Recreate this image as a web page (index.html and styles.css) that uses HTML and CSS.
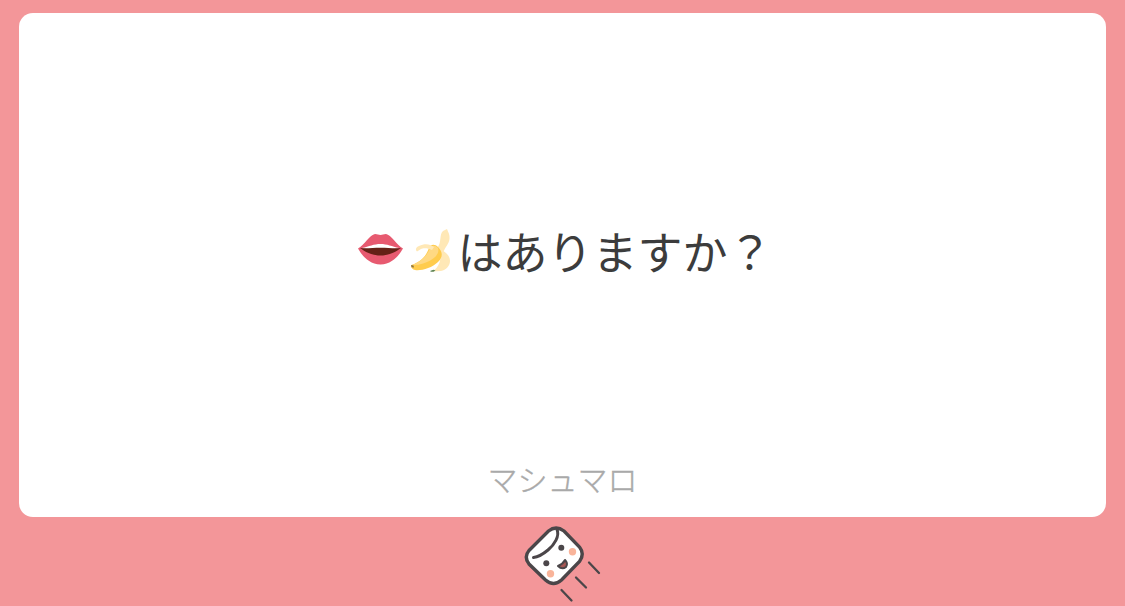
FILE: index.html
```html
<!DOCTYPE html>
<html lang="ja">

<head>
    <meta charset="UTF-8">
    <meta name="viewport" content="width=device-width, initial-scale=1.0">
    <title>マシュマロ</title>
    <link rel="stylesheet" href="styles.css">
</head>

<body>
    <main class="card">
        <p class="message">
            <svg class="emoji" viewBox="0 0 45 45" role="img" aria-label="口">
                <path fill="#e75a70" d="M0 20.500C6 17.500 12 6.500 17 6c2.500 0 3.500 1 5.500 1s3-1 5.500-1C33 6.500 39 17.500 45 20.500c-3 5-10 16-22.500 16S3 25.500 0 20.500z" />
                <path fill="#fff" d="M4 20C11 18.500 16 16 22.500 16S34 18.500 41 20C34 22.500 11 22.500 4 20z" />
                <path fill="#642116" d="M2 20c7 .6 13-.3 20.500-.3s13.500.9 20.500.3C38 23.500 32 27.500 22.500 27.500S7 23.500 2 20z" />
            </svg>
            <svg class="emoji" viewBox="0 0 45 45" role="img" aria-label="バナナ">
                <path fill="#ffe8b6" d="M28 20C33 15 30 6 34 3l4-2c1 3 3 5 2.500 10-.5 5-4.500 8-6.500 14z" />
                <path fill="#ffe8b6" d="M31 21c6 3 10 7 10 12 0 5-4 9-9 10l-9 .5c6-4 10-9 8-22.500z" />
                <path fill="#ffcc4d" d="M2.500 37C13 33 17 28 20 20c1.500-4 6-4 9-1 5 5 5 10 0 15-6 6-17 9-23 8-3-.5-4.500-3-3.500-5z" />
                <path fill="#ffd983" d="M3 37C13 33 18 28 21 20c2-3 5-3 8 0 2 6-4 11-11 14S7 37 3 37z" />
                <path fill="#ffe8b6" d="M8 23.500c-2-2-1-4.500 2-5.500 6-3 11-2 15 1l-2 3c-4-2-9-2-11-1z" />
                <path fill="#8a7444" d="M2 37l2.500.4.5 2.100-2.500-.3z" />
                <path fill="#5c8354" d="M21.500 42.800l3-1 2 .6-2 1.300-3 .1z" />
            </svg>
            <span>はありますか？</span>
        </p>
        <footer class="brand">マシュマロ</footer>
    </main>
    <svg class="mascot" viewBox="0 0 95 91" aria-hidden="true">
        <path class="body" d="M14 35.500 33.500 16Q41 10 49 16L64.500 32Q70 39 64.500 46.500L46.500 65Q38.500 72 30.500 65L14 49Q8.500 42 14 35.500z" />
        <path class="edge" d="M42 14.500C45 21 39 30 33 35S23 42 18.500 42.500" />
        <circle class="eye" cx="46.300" cy="32.700" r="3" />
        <circle class="eye" cx="31.300" cy="48.200" r="3" />
        <circle class="cheek" cx="57.500" cy="36.700" r="3.700" />
        <circle class="cheek" cx="35.500" cy="58.700" r="3.700" />
        <path class="mouth" d="M43 51Q48 49 50 45 53.500 48.500 51 52 47 55 43 51z" />
        <path class="motion" d="M74 47.500l10 10.500M61 62.500l10 10M46.500 75l10 10.500" />
    </svg>
</body>

</html>
```
FILE: styles.css
```css
body {
    display: flex;
    flex-direction: column;
    align-items: center;
    height: 100vh;
    margin: 0;
    padding: 13px 19px 0;
    box-sizing: border-box;
    overflow: hidden;
    background-color: #f39699;
    font-family: "Noto Sans CJK JP", sans-serif;
}

.card {
    display: flex;
    flex-direction: column;
    width: 100%;
    height: 504px;
    flex-shrink: 0;
    border-radius: 14px;
    background-color: #fff;
}

.message {
    display: flex;
    flex: 1;
    align-items: center;
    justify-content: center;
    margin: 0;
    padding: 31px 0 0 4px;
    color: #3c3c3c;
    font-size: 45px;
    line-height: 1;
}

.emoji {
    width: 1em;
    height: 1em;
    margin: 0 0.08em 0 0.04em;
}

.brand {
    height: 60px;
    color: #a9a9a9;
    font-size: 30px;
    font-weight: 300;
    line-height: 42px;
    text-align: center;
    -webkit-text-stroke: 0.4px #a9a9a9;
}

.mascot {
    width: 95px;
    height: 91px;
    margin-top: -2px;
    flex-shrink: 0;
}

.body {
    fill: #fff;
    stroke: #4b4649;
    stroke-width: 3.4;
}

.edge,
.motion {
    fill: none;
    stroke: #4b4649;
    stroke-width: 3;
    stroke-linecap: round;
}

.motion {
    stroke-width: 2.3;
}

.eye {
    fill: #4b4649;
}

.cheek {
    fill: #f9b49a;
}

.mouth {
    fill: #a85754;
    stroke: #4b4649;
    stroke-width: 2;
    stroke-linejoin: round;
}
```
